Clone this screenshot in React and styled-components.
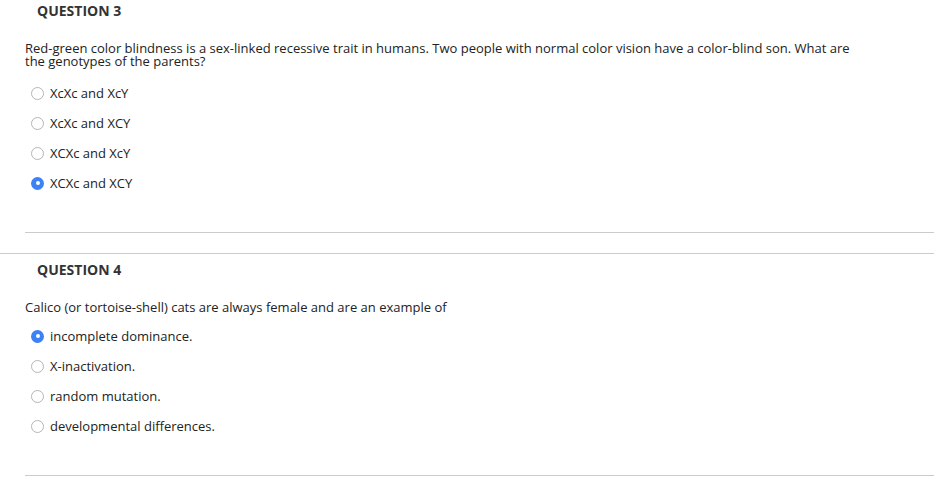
import React from 'react'
import styled, { createGlobalStyle } from 'styled-components'

const GlobalStyle = createGlobalStyle`
  body {
    margin: 0;
    background: #ffffff;
    font-family: "Open Sans", "Liberation Sans", sans-serif;
    color: #333333;
  }
`

const Page = styled.div`
  width: 934px;
  overflow: hidden;
`

const QuestionBlock = styled.section`
  border-top: ${(p) => (p.$first ? 'none' : '1px solid #cccccc')};
  padding-top: ${(p) => (p.$first ? '0' : '5px')};
`

const Heading = styled.h3`
  margin: 0;
  padding-left: 37px;
  font-size: 14px;
  font-weight: 700;
  line-height: 22px;
  color: #333333;
`

const Body = styled.div`
  padding-left: 25px;
`

const Prompt = styled.p`
  margin: 20px 0 0;
  font-size: 13px;
  line-height: 13px;
  color: #222222;
  max-width: 840px;
`

const Options = styled.ul`
  list-style: none;
  margin: ${(p) => p.$gap}px 0 0;
  padding: 0;
`

const OptionRow = styled.li`
  height: 30px;
  display: flex;
  align-items: center;
  gap: 6px;
  padding-left: 6px;
  font-size: 13px;
  color: #222222;
`

const Radio = styled.span`
  width: 13px;
  height: 13px;
  box-sizing: border-box;
  border-radius: 50%;
  border: ${(p) => (p.$checked ? 'none' : '1px solid #b5b5b5')};
  background: ${(p) => (p.$checked ? '#3b82f6' : '#ffffff')};
  display: flex;
  align-items: center;
  justify-content: center;
  flex-shrink: 0;
  &::after {
    content: '';
    width: 4px;
    height: 4px;
    border-radius: 50%;
    background: #ffffff;
    display: ${(p) => (p.$checked ? 'block' : 'none')};
  }
`

const Divider = styled.hr`
  border: none;
  border-top: 1px solid #cccccc;
  margin: ${(p) => p.$top}px 0 ${(p) => p.$bottom}px 25px;
`

const questions = [
  {
    title: 'QUESTION 3',
    prompt:
      'Red-green color blindness is a sex-linked recessive trait in humans. Two people with normal color vision have a color-blind son. What are the genotypes of the parents?',
    options: ['XcXc and XcY', 'XcXc and XCY', 'XCXc and XcY', 'XCXc and XCY'],
    selected: 3,
    gap: 10,
  },
  {
    title: 'QUESTION 4',
    prompt: 'Calico (or tortoise-shell) cats are always female and are an example of',
    options: [
      'incomplete dominance.',
      'X-inactivation.',
      'random mutation.',
      'developmental differences.',
    ],
    selected: 0,
    gap: 7,
  },
]

function App() {
  return (
    <>
      <GlobalStyle />
      <Page>
        {questions.map((q, i) => (
          <QuestionBlock key={q.title} $first={i === 0}>
            <Heading>{q.title}</Heading>
            <Body>
              <Prompt>{q.prompt}</Prompt>
              <Options $gap={q.gap}>
                {q.options.map((opt, j) => (
                  <OptionRow key={opt}>
                    <Radio $checked={j === q.selected} />
                    {opt}
                  </OptionRow>
                ))}
              </Options>
            </Body>
            <Divider $top={34} $bottom={20} />
          </QuestionBlock>
        ))}
      </Page>
    </>
  )
}

export default App
